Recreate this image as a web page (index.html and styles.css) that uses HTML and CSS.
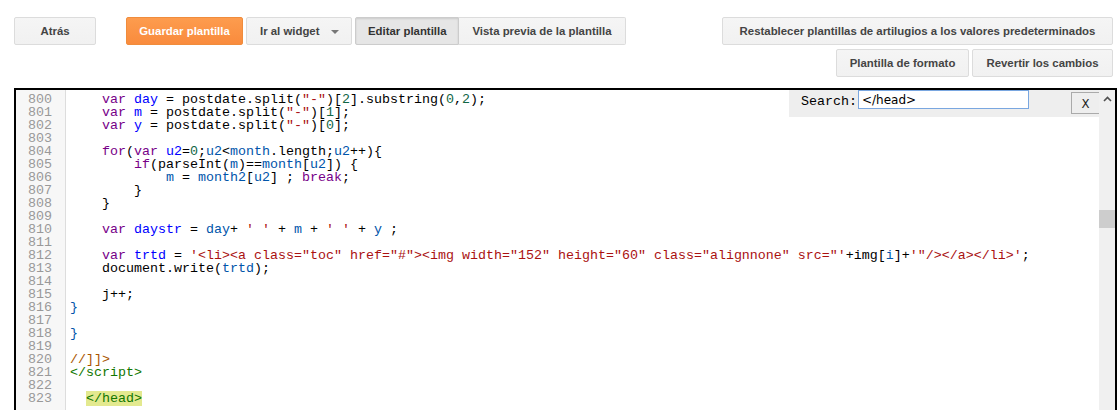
FILE: index.html
```html
<!DOCTYPE html>
<html lang="es">

<head>
    <meta charset="UTF-8">
    <title>Editar plantilla</title>
    <link rel="stylesheet" href="styles.css">
</head>

<body>
    <div class="toolbar">
        <div class="left">
            <button class="btn back">Atrás</button>
            <button class="btn primary">Guardar plantilla</button>
            <button class="btn widget">Ir al widget <span class="caret"></span></button>
            <div class="group">
                <button class="btn pressed">Editar plantilla</button>
                <button class="btn">Vista previa de la plantilla</button>
            </div>
        </div>
        <div class="right">
            <button class="btn">Restablecer plantillas de artilugios a los valores predeterminados</button>
            <div class="row">
                <button class="btn">Plantilla de formato</button>
                <button class="btn">Revertir los cambios</button>
            </div>
        </div>
    </div>

    <div class="editor">
        <div class="gutter">
            <div class="lines">
                <div>800</div><div>801</div><div>802</div><div>803</div>
                <div>804</div><div>805</div><div>806</div><div>807</div><div>808</div>
                <div>809</div><div>810</div><div>811</div><div>812</div><div>813</div>
                <div>814</div><div>815</div><div>816</div><div>817</div><div>818</div>
                <div>819</div><div>820</div><div>821</div><div>822</div><div>823</div>
            </div>
        </div>
        <div class="code">
            <div class="lines">
<pre>    <span class="kw">var</span> <span class="def">day</span> = postdate.split(<span class="str">"-"</span>)[<span class="num">2</span>].substring(<span class="num">0</span>,<span class="num">2</span>);</pre>
<pre>    <span class="kw">var</span> <span class="def">m</span> = postdate.split(<span class="str">"-"</span>)[<span class="num">1</span>];</pre>
<pre>    <span class="kw">var</span> <span class="def">y</span> = postdate.split(<span class="str">"-"</span>)[<span class="num">0</span>];</pre>
<pre> </pre>
<pre>    <span class="kw">for</span>(<span class="kw">var</span> <span class="def">u2</span>=<span class="num">0</span>;<span class="v2">u2</span>&lt;<span class="v2">month</span>.length;<span class="v2">u2</span>++){</pre>
<pre>        <span class="kw">if</span>(parseInt(<span class="v2">m</span>)==<span class="v2">month</span>[<span class="v2">u2</span>]) {</pre>
<pre>            <span class="v2">m</span> = <span class="v2">month2</span>[<span class="v2">u2</span>] ; <span class="kw">break</span>;</pre>
<pre>        }</pre>
<pre>    }</pre>
<pre> </pre>
<pre>    <span class="kw">var</span> <span class="def">daystr</span> = <span class="v2">day</span>+ <span class="str">' '</span> + <span class="v2">m</span> + <span class="str">' '</span> + <span class="v2">y</span> ;</pre>
<pre> </pre>
<pre>    <span class="kw">var</span> <span class="def">trtd</span> = <span class="str">'&lt;li&gt;&lt;a class="toc" href="#"&gt;&lt;img width="152" height="60" class="alignnone" src="'</span>+img[<span class="v2">i</span>]+<span class="str">'"/&gt;&lt;/a&gt;&lt;/li&gt;'</span>;</pre>
<pre>    document.write(<span class="v2">trtd</span>);</pre>
<pre> </pre>
<pre>    j++;</pre>
<pre><span class="v2">}</span></pre>
<pre> </pre>
<pre><span class="v2">}</span></pre>
<pre> </pre>
<pre><span class="cm">//]]&gt;</span></pre>
<pre><span class="tag">&lt;/script&gt;</span></pre>
<pre> </pre>
<pre>  <span class="tag hit">&lt;/head&gt;</span></pre>
            </div>
            <div class="search">
                <label>Search:</label>
                <input type="text" value="</head>">
                <button class="close">X</button>
            </div>
        </div>
        <div class="scrollbar">
            <div class="arrow">
                <svg width="9" height="6" viewBox="0 0 9 6"><path d="M1 5 L4.5 1.5 L8 5" fill="none" stroke="#505050" stroke-width="1.6"/></svg>
            </div>
            <div class="thumb"></div>
        </div>
    </div>
</body>

</html>
```

FILE: styles.css
```css
* {
    margin: 0;
    padding: 0;
    box-sizing: border-box;
}

body {
    width: 1120px;
    height: 410px;
    overflow: hidden;
    background-color: #fff;
    font-family: Arial, "Liberation Sans", sans-serif;
    padding: 17px 3px 0 14px;
}

/* top buttons */

.toolbar {
    display: flex;
    justify-content: space-between;
    align-items: flex-start;
    padding-right: 4px;
}

.left {
    display: flex;
    align-items: center;
}

.right {
    display: flex;
    flex-direction: column;
    align-items: flex-end;
    gap: 4px;
}

.row {
    display: flex;
    gap: 3px;
}

.btn {
    height: 28px;
    padding: 0 12px;
    border: 1px solid #dcdcdc;
    border-radius: 2px;
    background: linear-gradient(#f5f5f5, #f1f1f1);
    color: #444;
    font-family: Arial, "Liberation Sans", sans-serif;
    font-size: 11.4px;
    font-weight: bold;
    white-space: nowrap;
    cursor: pointer;
}

.back {
    width: 82px;
    margin-right: 30px;
}

.primary {
    width: 117px;
    margin-right: 3px;
    border-color: #f08c3c;
    background: linear-gradient(#fd9c4e, #f98b3d);
    color: #fff;
}

.widget {
    width: 106px;
    margin-right: 3px;
    padding: 0 13px;
    display: flex;
    align-items: center;
    gap: 11px;
}

.caret {
    width: 0;
    height: 0;
    border-left: 4px solid transparent;
    border-right: 4px solid transparent;
    border-top: 4px solid #777;
    margin-top: 1px;
}

.group {
    display: flex;
}

.group .btn {
    border-radius: 0;
}

.group .btn:first-child {
    width: 104px;
    border-radius: 2px 0 0 2px;
}

.group .btn:last-child {
    width: 167px;
    border-left: none;
    border-radius: 0 2px 2px 0;
}

.pressed {
    background: #e6e6e6;
    border-color: #ccc;
    box-shadow: inset 0 1px 2px rgba(0, 0, 0, 0.12);
    color: #333;
}

.right > .btn {
    width: 391px;
}

.row .btn:first-child {
    width: 133px;
}

.row .btn:last-child {
    width: 141px;
}

/* code editor */

.editor {
    margin-top: 11px;
    height: 340px;
    border: 2px solid #000;
    display: flex;
    overflow: hidden;
}

.gutter {
    width: 50px;
    flex: none;
    background-color: #f7f7f7;
    border-right: 1px solid #ddd;
    overflow: hidden;
}

.lines {
    margin-top: 3px;
}

.gutter .lines div {
    height: 13px;
    line-height: 13px;
    padding-right: 13px;
    text-align: right;
    color: #999;
    font-family: "Liberation Mono", "Courier New", monospace;
    font-size: 13.33px;
}

.code {
    flex: 1;
    position: relative;
    overflow: hidden;
    padding-left: 4px;
}

.code pre {
    height: 13px;
    line-height: 13px;
    font-family: "Liberation Mono", "Courier New", monospace;
    font-size: 13.33px;
    color: #000;
}

.kw { color: #708; }
.def { color: #00f; }
.v2 { color: #05a; }
.num { color: #164; }
.str { color: #a11; }
.cm { color: #a50; }
.tag { color: #170; }

.hit {
    background-color: #e3e98f;
}

.search {
    position: absolute;
    top: -1px;
    right: 0;
    width: 310px;
    height: 28px;
    background-color: #eee;
    display: flex;
    align-items: flex-start;
    padding: 1px 0 0 12px;
}

.search label {
    font-family: "Liberation Mono", "Courier New", monospace;
    font-size: 13.33px;
    color: #000;
    margin-top: 4px;
    margin-right: 1px;
}

.search input {
    width: 172px;
    height: 19px;
    border: 1px solid #7aa7e0;
    padding: 0 3px;
    font-family: Tahoma, "DejaVu Sans", sans-serif;
    font-size: 12px;
    color: #000;
    outline: none;
}

.close {
    margin-left: 42px;
    margin-top: 2px;
    width: 28px;
    height: 22px;
    border: 1px solid #aaa;
    border-right: none;
    background-color: #eee;
    font-family: "DejaVu Sans Condensed", "DejaVu Sans", sans-serif;
    font-size: 13px;
    color: #222;
}

.scrollbar {
    width: 16px;
    flex: none;
    background-color: #f0f0f0;
    display: flex;
    flex-direction: column;
}

.arrow {
    height: 17px;
    display: flex;
    justify-content: center;
    align-items: center;
}

.thumb {
    margin-top: 103px;
    height: 18px;
    background-color: #cdcdcd;
}
```
